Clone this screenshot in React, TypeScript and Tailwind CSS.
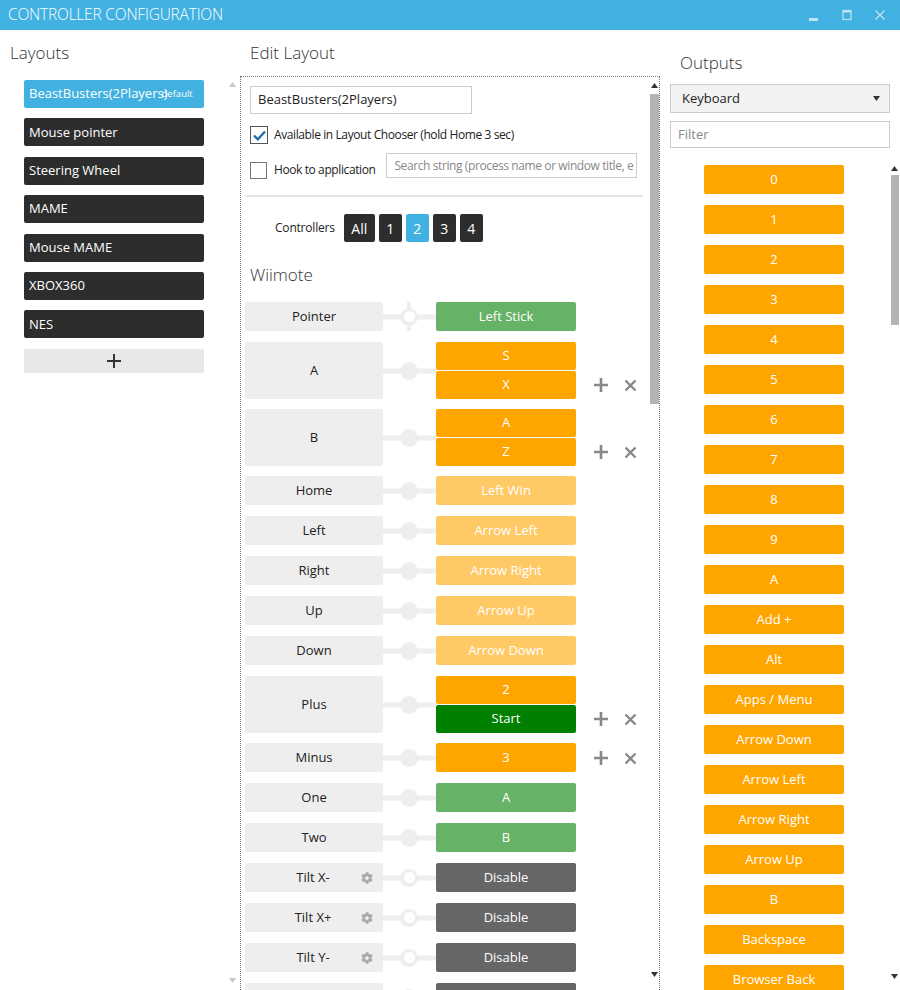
import React from "react";
import { FaCog } from "react-icons/fa";

type Out = { text: string; c: string };
type Row = { label: string; kind: "cross" | "dot" | "ring"; outs: Out[]; gear?: boolean; actions?: boolean };

const OR = "bg-[#ffa500]";
const LO = "bg-[#ffc966]";
const GR = "bg-[#66b266]";
const DG = "bg-[#008000]";
const GY = "bg-[#666666]";

const rows: Row[] = [
  { label: "Pointer", kind: "cross", outs: [{ text: "Left Stick", c: GR }] },
  { label: "A", kind: "dot", outs: [{ text: "S", c: OR }, { text: "X", c: OR }], actions: true },
  { label: "B", kind: "dot", outs: [{ text: "A", c: OR }, { text: "Z", c: OR }], actions: true },
  { label: "Home", kind: "dot", outs: [{ text: "Left Win", c: LO }] },
  { label: "Left", kind: "dot", outs: [{ text: "Arrow Left", c: LO }] },
  { label: "Right", kind: "dot", outs: [{ text: "Arrow Right", c: LO }] },
  { label: "Up", kind: "dot", outs: [{ text: "Arrow Up", c: LO }] },
  { label: "Down", kind: "dot", outs: [{ text: "Arrow Down", c: LO }] },
  { label: "Plus", kind: "dot", outs: [{ text: "2", c: OR }, { text: "Start", c: DG }], actions: true },
  { label: "Minus", kind: "dot", outs: [{ text: "3", c: OR }], actions: true },
  { label: "One", kind: "dot", outs: [{ text: "A", c: GR }] },
  { label: "Two", kind: "dot", outs: [{ text: "B", c: GR }] },
  { label: "Tilt X-", kind: "ring", outs: [{ text: "Disable", c: GY }], gear: true },
  { label: "Tilt X+", kind: "ring", outs: [{ text: "Disable", c: GY }], gear: true },
  { label: "Tilt Y-", kind: "ring", outs: [{ text: "Disable", c: GY }], gear: true },
  { label: "Tilt Y+", kind: "ring", outs: [{ text: "Disable", c: GY }], gear: true },
];

const outputs = [
  "0", "1", "2", "3", "4", "5", "6", "7", "8", "9", "A", "Add +", "Alt", "Apps / Menu",
  "Arrow Down", "Arrow Left", "Arrow Right", "Arrow Up", "B", "Backspace", "Browser Back", "Browser Fwd",
];

const layouts = ["Mouse pointer", "Steering Wheel", "MAME", "Mouse MAME", "XBOX360", "NES"];

function PlusIcon() {
  return (
    <svg width="16" height="16" viewBox="0 0 16 16">
      <path d="M8 1v14M1 8h14" stroke="#888" strokeWidth="2.6" />
    </svg>
  );
}
function XIcon() {
  return (
    <svg width="13" height="13" viewBox="0 0 13 13">
      <path d="M1.5 1.5l10 10M11.5 1.5l-10 10" stroke="#888" strokeWidth="2.4" />
    </svg>
  );
}
function UpArrow({ c = "#333" }: { c?: string }) {
  return (
    <svg width="7" height="5" viewBox="0 0 7 5">
      <path d="M0 5L3.5 0L7 5Z" fill={c} />
    </svg>
  );
}
function DownArrow({ c = "#333" }: { c?: string }) {
  return (
    <svg width="7" height="5" viewBox="0 0 7 5">
      <path d="M0 0L3.5 5L7 0Z" fill={c} />
    </svg>
  );
}

function Connector({ kind }: { kind: Row["kind"] }) {
  return (
    <div className="relative w-[53px] shrink-0">
      <div className="absolute left-0 right-0 top-1/2 h-[5px] -translate-y-1/2 bg-[#eeeeee]" />
      {kind === "cross" && <div className="absolute left-[24px] top-0 bottom-0 w-[4px] bg-[#eeeeee]" />}
      <div className="absolute left-[17px] top-1/2 flex h-[18px] w-[18px] -translate-y-1/2 items-center justify-center rounded-full bg-[#eeeeee]">
        {kind !== "dot" && <div className="h-[11px] w-[11px] rounded-full bg-white" />}
      </div>
    </div>
  );
}

function MapRow({ r }: { r: Row }) {
  const dbl = r.outs.length > 1;
  return (
    <div className={`flex ${dbl ? "h-[57px] mb-[10px]" : "h-[29px] mb-[11px]"}`}>
      <div className="relative flex w-[138px] shrink-0 items-center justify-center rounded-[2px] bg-[#eeeeee] text-[13px] text-[#222]">
        <span className={r.gear ? "mr-[2px]" : ""}>{r.label}</span>
        {r.gear && (
          <span className="absolute right-[10px] top-1/2 -translate-y-1/2 text-[#aaaaaa]">
            <FaCog size={12} />
          </span>
        )}
      </div>
      <Connector kind={r.kind} />
      <div className="flex w-[140px] shrink-0 flex-col gap-[1px]">
        {r.outs.map((o, i) => (
          <div key={i} className={`flex flex-1 items-center justify-center rounded-[2px] ${o.c} text-[13px] text-white`}>
            {o.text}
          </div>
        ))}
      </div>
      {r.actions && (
        <div className="ml-[17px] flex flex-col justify-end">
          <div className="flex h-[28px] items-center gap-[15px]">
            <PlusIcon />
            <XIcon />
          </div>
        </div>
      )}
    </div>
  );
}

export default function App() {
  return (
    <div className="h-[990px] w-[900px] overflow-hidden bg-white font-['Open_Sans','Noto_Sans',sans-serif] text-[#222]">
      {/* Title bar */}
      <div className="flex h-[30px] items-center justify-between bg-[#41b1e1] pl-[8px] pr-[14px]">
        <span className="text-[15.5px] font-light tracking-[-0.2px] text-white">CONTROLLER CONFIGURATION</span>
        <div className="flex items-center gap-[21px]">
          <svg width="12" height="12" viewBox="0 0 12 12">
            <rect x="1" y="9" width="9" height="3" fill="#bfe3f5" />
          </svg>
          <svg width="12" height="12" viewBox="0 0 12 12">
            <rect x="2" y="1.5" width="8" height="9" fill="none" stroke="#bfe3f5" strokeWidth="1.2" />
            <rect x="2" y="1" width="8" height="2.5" fill="#bfe3f5" />
          </svg>
          <svg width="12" height="12" viewBox="0 0 12 12">
            <path d="M1.5 1.5l9 9M10.5 1.5l-9 9" stroke="#bfe3f5" strokeWidth="1.2" />
          </svg>
        </div>
      </div>

      <div className="flex">
        {/* Layouts */}
        <div className="relative w-[240px] shrink-0">
          <div className="flex h-[46px] items-center pl-[10px] text-[17px] font-light text-[#333]">Layouts</div>
          <div className="ml-[24px] mt-[4px] flex w-[180px] flex-col gap-[10.4px]">
            <div className="flex h-[28px] items-center rounded-[2px] bg-[#41b1e1] pl-[5px] text-[13px] text-white">
              <span>BeastBusters(2Players)</span>
              <span className="ml-[-6px] text-[9.5px]">default</span>
            </div>
            {layouts.map((l) => (
              <div key={l} className="flex h-[28px] items-center rounded-[2px] bg-[#2d2d2d] pl-[5px] text-[13px] text-white">
                {l}
              </div>
            ))}
            <div className="flex h-[24px] items-center justify-center rounded-[2px] bg-[#e8e8e8]">
              <svg width="14" height="14" viewBox="0 0 14 14">
                <path d="M7 0v14M0 7h14" stroke="#333" strokeWidth="2" />
              </svg>
            </div>
          </div>
          <div className="absolute left-[229px] top-[52px]">
            <UpArrow c="#c8c8c8" />
          </div>
          <div className="absolute left-[229px] top-[948px]">
            <DownArrow c="#c8c8c8" />
          </div>
        </div>

        {/* Edit Layout */}
        <div className="w-[420px] shrink-0">
          <div className="flex h-[46px] items-center pl-[10px] text-[17px] font-light text-[#333]">Edit Layout</div>
          <div className="flex h-[920px] border border-dotted border-[#777]">
            <div className="flex-1 overflow-hidden">
              <div className="pl-[9px]">
                <div className="mt-[9px] flex h-[28px] w-[222px] items-center border border-[#cccccc] pl-[7px] text-[13px]">
                  BeastBusters(2Players)
                </div>
                <div className="mt-[12px] flex items-center">
                  <div className="flex h-[18px] w-[18px] items-center justify-center border border-[#555] bg-white">
                    <svg width="13" height="11" viewBox="0 0 13 11">
                      <path d="M1 5.5l3.8 3.8L12 1.5" fill="none" stroke="#1f6fb2" strokeWidth="2.4" />
                    </svg>
                  </div>
                  <span className="ml-[6px] text-[12px] tracking-[-0.4px]">Available in Layout Chooser (hold Home 3 sec)</span>
                </div>
                <div className="mt-[9px] flex items-start">
                  <div className="mt-[8px] flex items-center">
                    <div className="h-[17px] w-[17px] border border-[#777] bg-white" />
                    <span className="ml-[7px] text-[12px] tracking-[-0.4px]">Hook to application</span>
                  </div>
                  <div className="ml-[11px] flex h-[25px] w-[251px] items-center overflow-hidden whitespace-nowrap border border-[#cccccc] pl-[7px] text-[12px] tracking-[-0.4px] text-[#888]">
                    Search string (process name or window title, e
                  </div>
                </div>
                <div className="ml-[-4px] mt-[16px] h-[2px] w-[397px] bg-[#e3e3e3]" />
                <div className="mt-[17px] flex items-center">
                  <span className="ml-[25px] text-[12px] tracking-[-0.2px]">Controllers</span>
                  <div className="ml-[9px] flex gap-[4px]">
                    <div className="flex h-[28px] w-[31px] items-center justify-center rounded-[2px] bg-[#2d2d2d] text-[14px] text-white">All</div>
                    <div className="flex h-[28px] w-[23px] items-center justify-center rounded-[2px] bg-[#2d2d2d] text-[14px] text-white">1</div>
                    <div className="flex h-[28px] w-[23px] items-center justify-center rounded-[2px] bg-[#41b1e1] text-[14px] text-white">2</div>
                    <div className="flex h-[28px] w-[23px] items-center justify-center rounded-[2px] bg-[#2d2d2d] text-[14px] text-white">3</div>
                    <div className="flex h-[28px] w-[23px] items-center justify-center rounded-[2px] bg-[#2d2d2d] text-[14px] text-white">4</div>
                  </div>
                </div>
                <div className="mt-[8px] flex h-[50px] items-center text-[17px] font-light text-[#333]">Wiimote</div>
              </div>
              <div className="mt-[2px] pl-[4px]">
                {rows.map((r) => (
                  <MapRow key={r.label} r={r} />
                ))}
              </div>
            </div>
            <div className="flex w-[9px] shrink-0 flex-col items-center">
              <div className="mt-[6px] flex h-[5px] items-center">
                <UpArrow />
              </div>
              <div className="mt-[6px] h-[310px] w-[9px] bg-[#b4b4b4]" />
              <div className="mt-[568px] flex h-[5px] items-center">
                <DownArrow />
              </div>
            </div>
          </div>
        </div>

        {/* Outputs */}
        <div className="flex-1">
          <div className="h-[54px] pl-[20px] pt-[21px] text-[17px] font-light leading-[24px] text-[#333]">Outputs</div>
          <div className="ml-[10px] w-[220px]">
            <div className="flex h-[29px] items-center justify-between border border-[#cccccc] bg-[#f2f2f2] pl-[11px] pr-[9px] text-[13px]">
              <span>Keyboard</span>
              <DownArrow />
            </div>
            <div className="mt-[8px] flex h-[27px] items-center border border-[#cccccc] pl-[7px] text-[13px] text-[#888]">Filter</div>
          </div>
          <div className="flex">
            <div className="ml-[44px] mt-[17px] flex w-[140px] flex-col gap-[11px]">
              {outputs.map((o) => (
                <div key={o} className="flex h-[29px] shrink-0 items-center justify-center rounded-[2px] bg-[#ffa500] text-[13px] text-white">
                  {o}
                </div>
              ))}
            </div>
            <div className="ml-[46px] mt-[16px] flex w-[9px] flex-col items-center">
              <div className="mt-[2px] flex h-[5px] items-center">
                <UpArrow />
              </div>
              <div className="mt-[4px] h-[150px] w-[8px] bg-[#b4b4b4]" />
              <div className="mt-[649px] flex h-[5px] items-center">
                <DownArrow />
              </div>
            </div>
          </div>
        </div>
      </div>
    </div>
  );
}
